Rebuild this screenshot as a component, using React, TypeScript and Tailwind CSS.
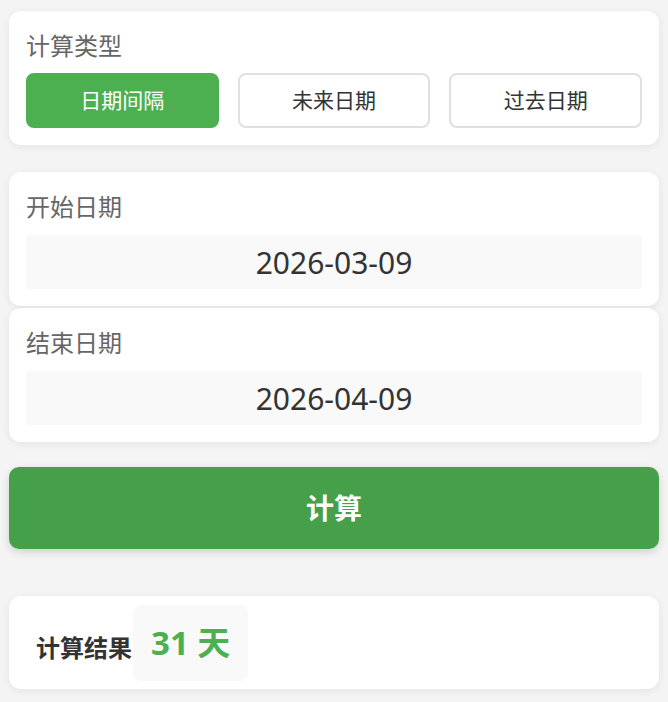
import { useState } from 'react'

const modes = ['日期间隔', '未来日期', '过去日期']

function DateCard({ label, value }: { label: string; value: string }) {
  return (
    <div className="bg-white rounded-[12px] px-[17px] pt-[17px] pb-[17px] shadow-[0_2px_8px_rgba(0,0,0,0.07)]">
      <div className="text-[24px] leading-[36px] text-[#666]">{label}</div>
      <div className="mt-[10px] h-[54px] rounded-[4px] bg-[#f9f9f9] flex items-center justify-center text-[30px] text-[#333]">
        {value}
      </div>
    </div>
  )
}

export default function App() {
  const [mode, setMode] = useState(0)

  return (
    <div
      className="min-h-[702px] bg-[#f4f4f4] px-[9px] pt-[11px] pb-[14px]"
      style={{ fontFamily: '"Noto Sans", "Noto Sans CJK SC", sans-serif' }}
    >
      <div className="bg-white rounded-[12px] px-[17px] pt-[17px] pb-[17px] shadow-[0_2px_8px_rgba(0,0,0,0.07)]">
        <div className="text-[24px] leading-[36px] text-[#666]">计算类型</div>
        <div className="mt-[9px] grid grid-cols-3 gap-[19px]">
          {modes.map((m, i) => (
            <button
              key={m}
              onClick={() => setMode(i)}
              className={
                i === mode
                  ? 'h-[55px] rounded-[8px] bg-[#4caf50] text-white text-[21px] border-2 border-[#4caf50]'
                  : 'h-[55px] rounded-[8px] bg-white text-[#333] text-[21px] border-2 border-[#e0e0e0]'
              }
            >
              {m}
            </button>
          ))}
        </div>
      </div>

      <div className="mt-[27px]">
        <DateCard label="开始日期" value="2026-03-09" />
      </div>
      <div className="mt-[2px]">
        <DateCard label="结束日期" value="2026-04-09" />
      </div>

      <button className="mt-[25px] w-full h-[82px] rounded-[10px] bg-[#46a04a] text-white text-[28px] font-bold shadow-[0_3px_8px_rgba(0,0,0,0.15)]">
        计算
      </button>

      <div className="mt-[47px] bg-white rounded-[12px] pl-[27px] pt-[9px] pb-[8px] flex items-center shadow-[0_2px_8px_rgba(0,0,0,0.07)]">
        <span className="text-[24px] font-bold text-[#333] mt-[10px]">计算结果</span>
        <span className="ml-[1px] h-[76px] px-[18px] rounded-[8px] bg-[#f9f9f9] flex items-center text-[33px] font-bold text-[#4caf50]">
          31 天
        </span>
      </div>
    </div>
  )
}
